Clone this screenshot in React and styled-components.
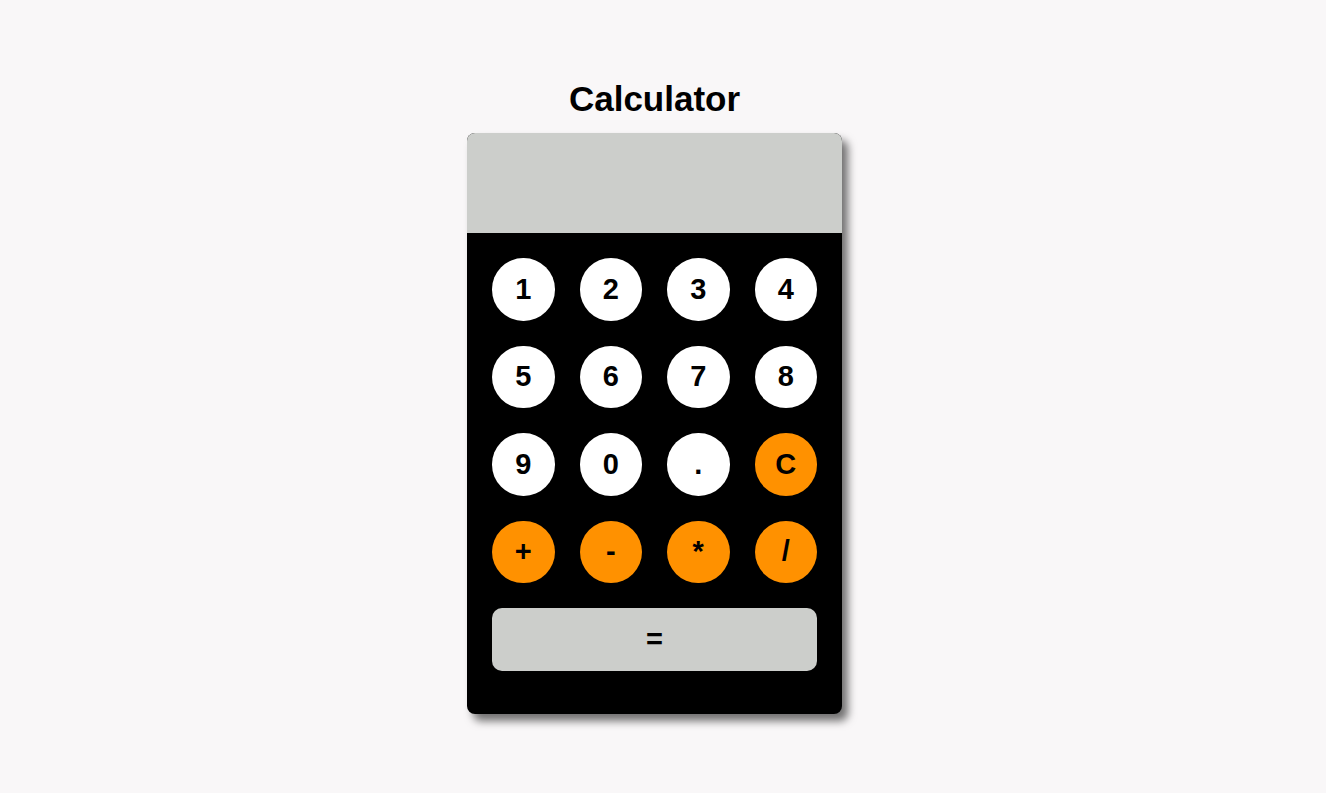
import styled, { createGlobalStyle } from 'styled-components';

const GlobalStyle = createGlobalStyle`
  body {
    margin: 0;
    background-color: #f9f7f8;
    font-family: "Liberation Sans", Arial, sans-serif;
  }
`

// the reference was taken with a 17px scrollbar gutter on the right
const Page = styled.div`
  display: flex;
  flex-direction: column;
  align-items: center;
  padding: 79px 17px 60px 0;
`

const Title = styled.h1`
  margin: 0 0 14px 0;
  font-size: 35px;
  line-height: 40px;
  font-weight: bold;
  color: #000;
`

const Calc = styled.div`
  width: 375px;
  height: 581px;
  background-color: #000;
  border-radius: 8px;
  overflow: hidden;
  box-shadow: 6px 7px 8px rgba(0, 0, 0, 0.55);
  display: flex;
  flex-direction: column;
`

const Display = styled.div`
  height: 100px;
  background-color: #cccecb;
  flex-shrink: 0;
`

const Keys = styled.div`
  display: grid;
  grid-template-columns: repeat(4, 1fr);
  gap: 25px;
  padding: 25px;
`

const Key = styled.button`
  height: 62.5px;
  border: none;
  border-radius: 50%;
  background-color: ${props => props.orange ? '#ff9100' : '#fff'};
  color: #000;
  font-family: "Liberation Sans", Arial, sans-serif;
  font-size: 29px;
  font-weight: bold;
  cursor: pointer;
  padding: 0;
`

const Equals = styled(Key)`
  grid-column: 1 / span 4;
  border-radius: 10px;
  background-color: #cccecb;
`

const keys = [
  ['1'], ['2'], ['3'], ['4'],
  ['5'], ['6'], ['7'], ['8'],
  ['9'], ['0'], ['.'], ['C', true],
  ['+', true], ['-', true], ['*', true], ['/', true],
]

export default function App() {
  return <>
    <GlobalStyle />
    <Page>
      <Title>Calculator</Title>
      <Calc>
        <Display />
        <Keys>
          {keys.map(([k, orange]) => <Key key={k} orange={orange}>{k}</Key>)}
          <Equals>=</Equals>
        </Keys>
      </Calc>
    </Page>
  </>
}
